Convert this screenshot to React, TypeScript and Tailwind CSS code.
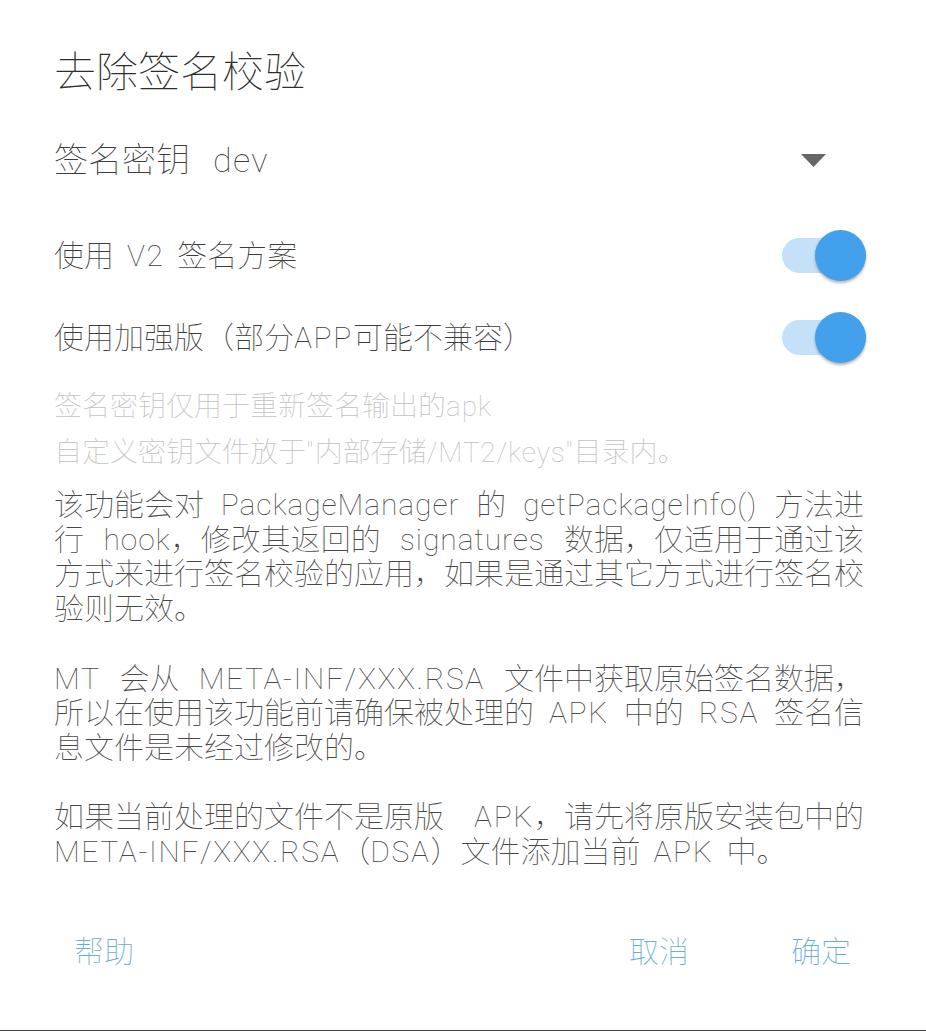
import { useState } from "react";

const font = {
  fontFamily:
    "Roboto, 'Noto Sans CJK SC Thin', 'Noto Sans CJK SC Light', 'Noto Sans CJK SC DemiLight', 'Noto Sans CJK SC', sans-serif",
};

// latin runs get extra tracking (caps a bit more than lowercase), cjk glyphs stay on their em grid
const Mixed: React.FC<{ text: string }> = ({ text }) => (
  <>
    {text.split(/([\x21-\x7e]+)/).map((part, i) => {
      if (!/^[\x21-\x7e]+$/.test(part)) return <span key={i}>{part}</span>;
      const caps = !/[a-z]/.test(part);
      return (
        <span key={i} className={caps ? "tracking-[0.055em]" : "tracking-[0.03em]"}>
          {part}
        </span>
      );
    })}
  </>
);

// android style justification: only the spaces stretch
const Line: React.FC<{ text: string; justify: boolean }> = ({ text, justify }) => {
  const words = text.split(" ");
  return (
    <div
      className={
        justify && words.length > 1
          ? "flex justify-between whitespace-nowrap"
          : "flex gap-[13px] whitespace-nowrap"
      }
    >
      {words.map((w, i) => (
        <span key={i}>
          <Mixed text={w} />
        </span>
      ))}
    </div>
  );
};

const Toggle: React.FC<{ on: boolean; onChange: () => void }> = ({ on, onChange }) => (
  <button onClick={onChange} className="relative w-[84px] h-[52px] flex items-center">
    <span className={`w-full h-[35px] rounded-full ${on ? "bg-[#c5e1f9]" : "bg-[#bdbdbd]"}`} />
    <span
      className={`absolute top-px w-[51px] h-[51px] rounded-full shadow-[0_2px_3px_rgba(0,0,0,0.3)] ${
        on ? "right-0 bg-[#42a0ec]" : "left-0 bg-[#f5f5f5]"
      }`}
    />
  </button>
);

const paragraphs: string[][] = [
  [
    "该功能会对 PackageManager 的 getPackageInfo() 方法进",
    "行 hook，修改其返回的 signatures 数据，仅适用于通过该",
    "方式来进行签名校验的应用，如果是通过其它方式进行签名校",
    "验则无效。",
  ],
  [
    "MT 会从 META-INF/XXX.RSA 文件中获取原始签名数据，",
    "所以在使用该功能前请确保被处理的 APK 中的 RSA 签名信",
    "息文件是未经过修改的。",
  ],
  [
    "如果当前处理的文件不是原版 APK，请先将原版安装包中的",
    "META-INF/XXX.RSA（DSA）文件添加当前 APK 中。",
  ],
];

export default function App() {
  const [v2, setV2] = useState(true);
  const [strong, setStrong] = useState(true);

  return (
    <div className="w-[926px] h-[1031px] bg-white flex flex-col font-thin" style={font}>
      <div className="pt-[43px] pl-[54px] text-[42px] leading-[60px] text-[#2e2e2e]">去除签名校验</div>

      <div className="mt-[25px] h-16 pl-[54px] pr-[100px] flex items-center justify-between">
        <span className="text-[34px] text-[#3c3c3c]">
          签名密钥<span className="ml-[23px] tracking-[0.04em]">dev</span>
        </span>
        <svg width="25" height="13" viewBox="0 0 25 13">
          <polygon points="0,0 25,0 12.5,13" fill="#666" />
        </svg>
      </div>

      <div className="mt-[22px] h-[82px] pl-[54px] pr-[60px] flex items-center justify-between">
        <span className="text-[30px] text-[#3c3c3c]">
          使用<span className="mx-[13px] tracking-[0.05em]">V2</span>签名方案
        </span>
        <Toggle on={v2} onChange={() => setV2(!v2)} />
      </div>
      <div className="h-[82px] pl-[54px] pr-[60px] flex items-center justify-between">
        <span className="text-[30px] text-[#3c3c3c]">
          <Mixed text="使用加强版（部分APP可能不兼容）" />
        </span>
        <Toggle on={strong} onChange={() => setStrong(!strong)} />
      </div>

      <div className="mt-[6px] pl-[54px] text-[28px] leading-[46px] text-[#c2c2c2]">
        <div>
          <Mixed text="签名密钥仅用于重新签名输出的apk" />
        </div>
        <div>
          <Mixed text={'自定义密钥文件放于"内部存储/MT2/keys"目录内。'} />
        </div>
      </div>

      <div className="mt-[12px] pl-[54px] pr-[62px] text-[30px] leading-[34.7px] text-[#484848]">
        {paragraphs.map((lines, i) => (
          <div key={i} className={i > 0 ? "mt-[34.7px]" : ""}>
            {lines.map((line, j) => (
              <Line key={j} text={line} justify={j < lines.length - 1} />
            ))}
          </div>
        ))}
      </div>

      <div className="mt-[53px] h-[58px] pl-[74px] pr-[75px] flex items-center justify-between text-[30px] text-[#68acdb]">
        <button>帮助</button>
        <div className="flex gap-[102px]">
          <button>取消</button>
          <button>确定</button>
        </div>
      </div>

      <div className="mt-auto h-px bg-[#444]" />
    </div>
  );
}
